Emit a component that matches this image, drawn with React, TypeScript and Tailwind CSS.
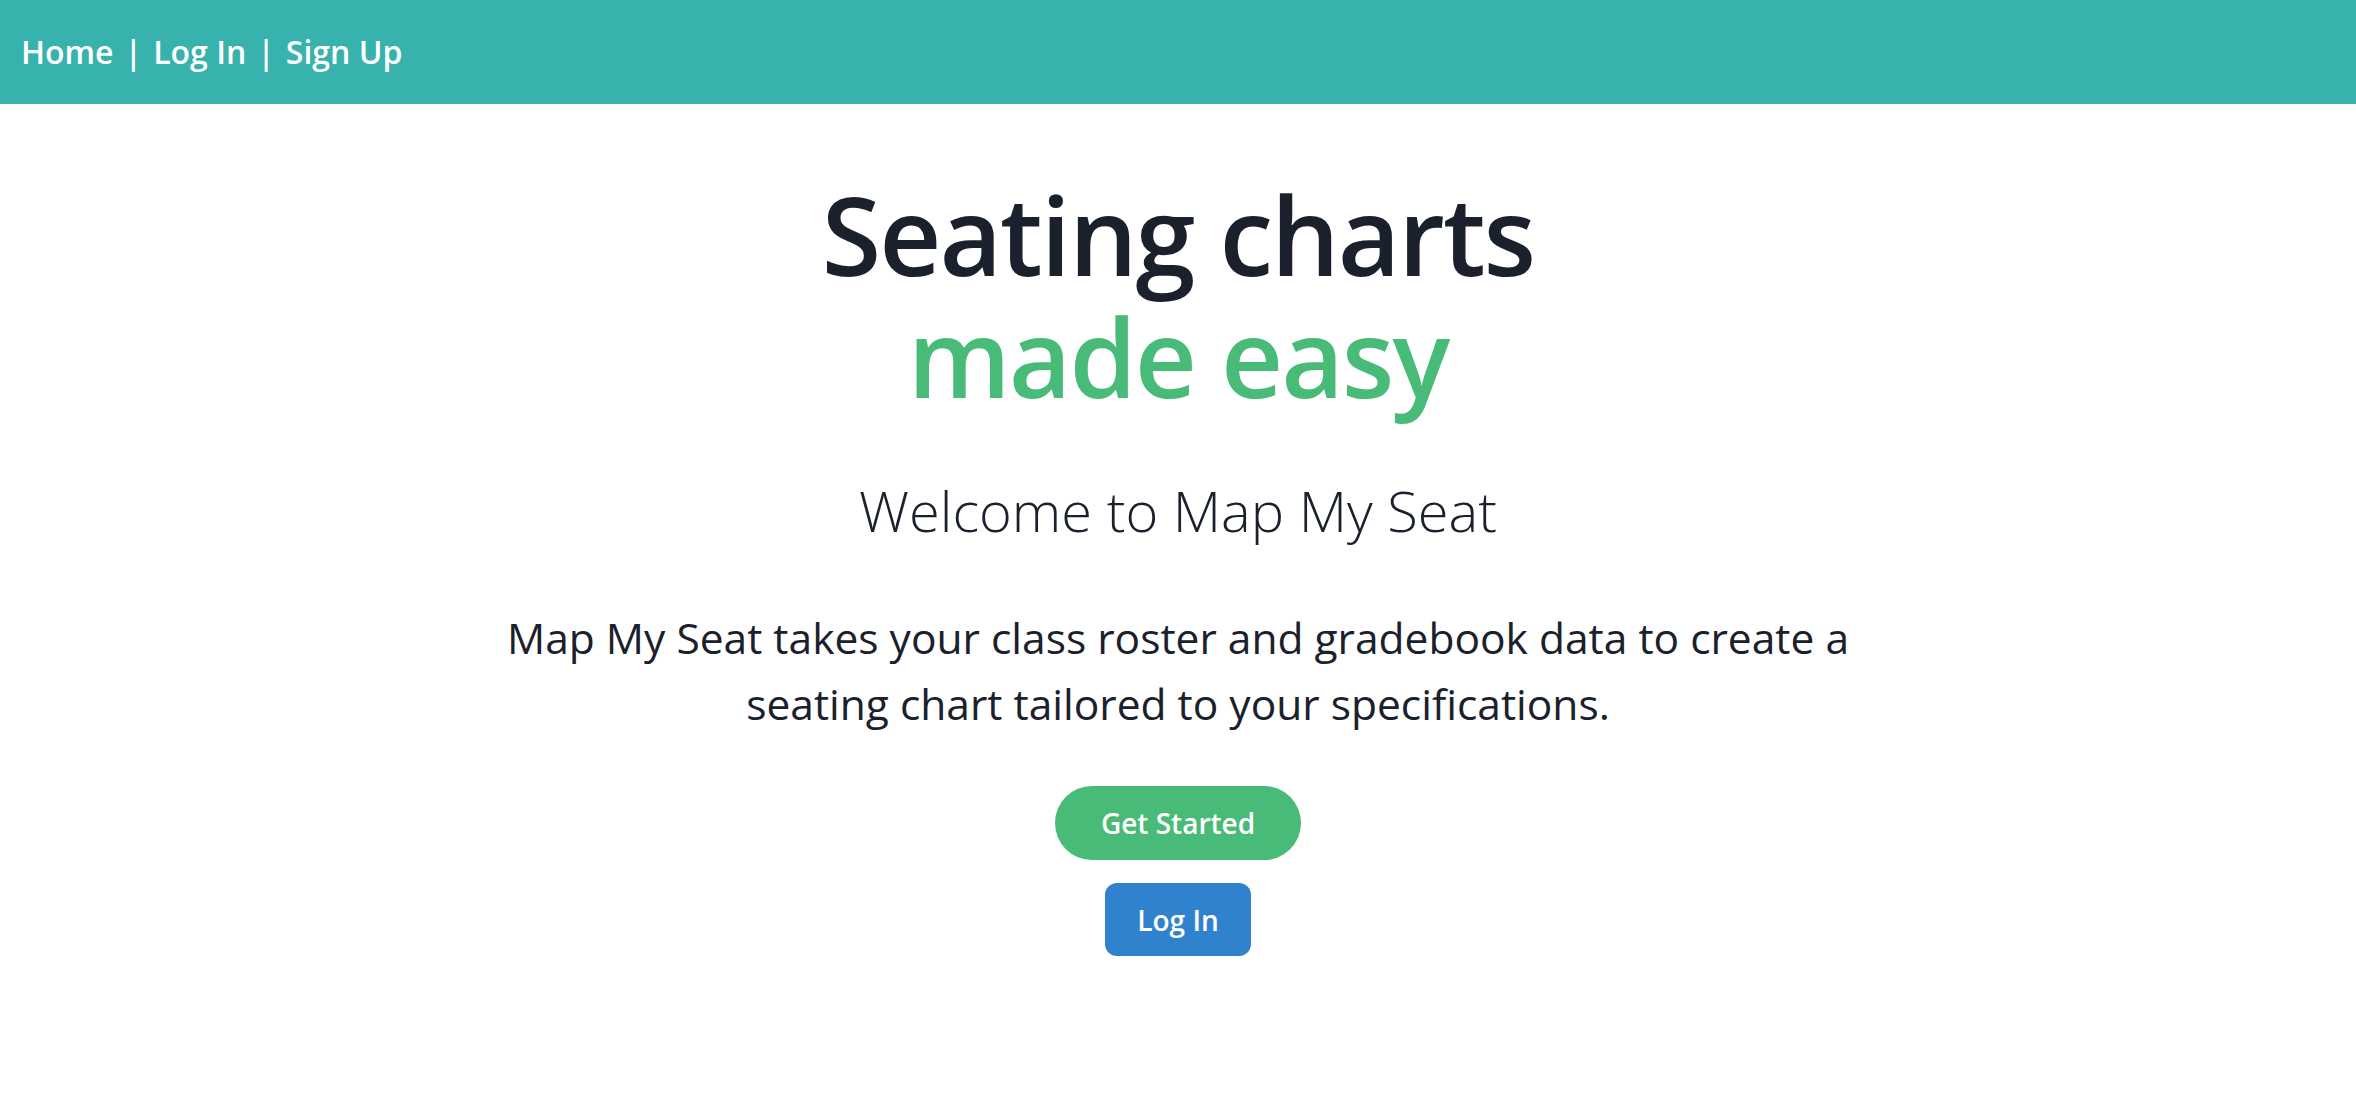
const NAV_LINKS = ['Home', 'Log In', 'Sign Up']

function NavBar() {
  return (
    <nav className="h-[104px] bg-[#38b2ac] flex items-center px-[21px]">
      {NAV_LINKS.map((label, i) => (
        <div key={label} className="flex items-center">
          {i > 0 && <span className="mx-[11px] text-white text-[32px] font-semibold">|</span>}
          <a href="#" className="text-white text-[32px] font-semibold">
            {label}
          </a>
        </div>
      ))}
    </nav>
  )
}

export default function App() {
  return (
    <div className="min-h-[1114px] bg-white text-[#1a202c] font-['Open_Sans',sans-serif]">
      <NavBar />
      <main className="flex flex-col items-center text-center">
        <h1 className="mt-[70px] text-[108px] leading-[122px] font-semibold tracking-[-2px]">
          Seating charts
          <span className="block text-[#48bb78]">made easy</span>
        </h1>
        <h2 className="mt-[50px] text-[56px] leading-[84px] font-light">Welcome to Map My Seat</h2>
        <p className="mt-[53px] max-w-[1400px] text-[42.5px] leading-[66px]">
          Map My Seat takes your class roster and gradebook data to create a seating chart tailored to your
          specifications.
        </p>
        <button className="mt-[49px] h-[74px] px-[46px] rounded-full bg-[#48bb78] text-white text-[28px] font-semibold">
          Get Started
        </button>
        <button className="mt-[23px] h-[73px] px-[32px] rounded-xl bg-[#3182ce] text-white text-[28px] font-semibold">
          Log In
        </button>
      </main>
    </div>
  )
}
